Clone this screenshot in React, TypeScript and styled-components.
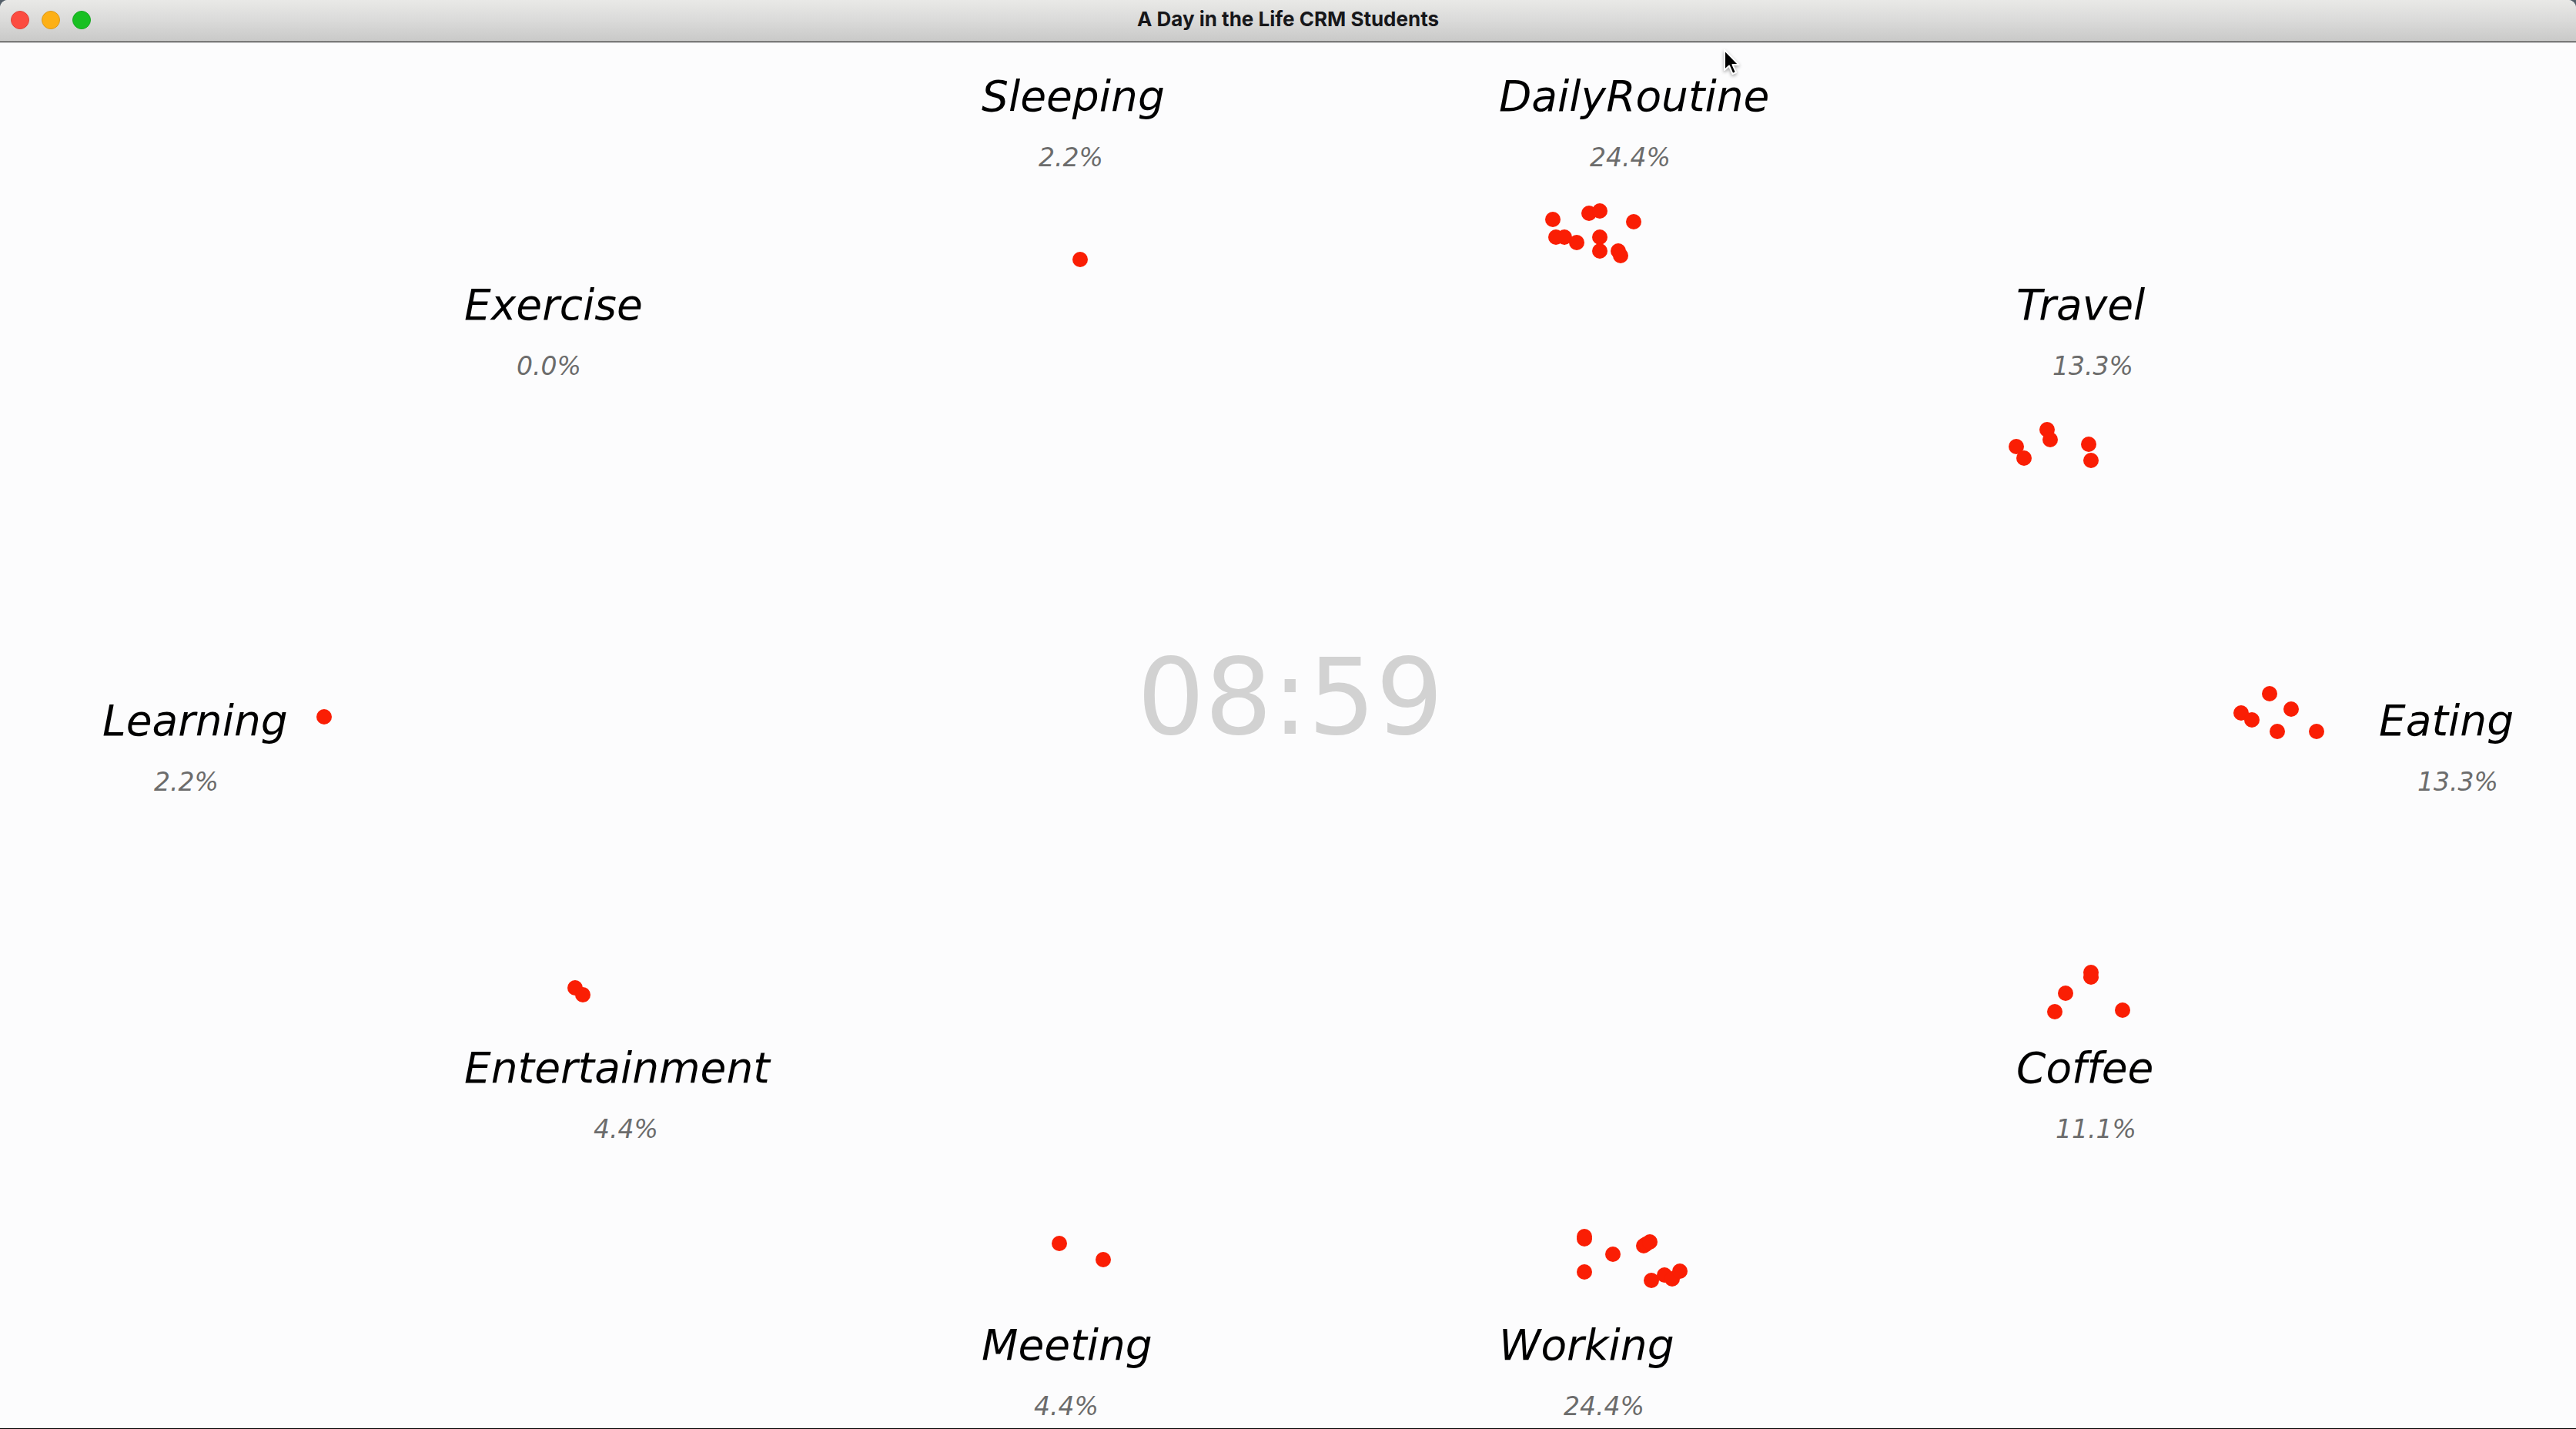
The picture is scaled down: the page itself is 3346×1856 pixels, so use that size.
import React from "react";
import styled, { createGlobalStyle } from "styled-components";

/* Size of the simulation world; places on it are scaled to the window. */
const WORLD = { width: 3346, height: 1800 };

type Point = [number, number];

interface Activity {
  name: string;
  share: string;
  at: Point;
  indent: number;
  students: Point[];
}

const activities: Activity[] = [
  { name: "Sleeping", share: "2.2%", at: [1275, 37], indent: 74, students: [[1403, 282]] },
  {
    name: "DailyRoutine", share: "24.4%", at: [1947, 37], indent: 118,
    students: [
      [2017, 230], [2064, 222], [2078, 219], [2122, 233], [2021, 253], [2032, 253],
      [2048, 260], [2078, 253], [2078, 271], [2102, 271], [2105, 277],
    ],
  },
  {
    name: "Travel", share: "13.3%", at: [2619, 308], indent: 47,
    students: [[2659, 503], [2663, 516], [2619, 525], [2629, 540], [2713, 522], [2716, 543]],
  },
  {
    name: "Eating", share: "13.3%", at: [3090, 848], indent: 50,
    students: [[2948, 846], [2976, 866], [2911, 871], [2925, 880], [2958, 895], [3009, 895]],
  },
  {
    name: "Coffee", share: "11.1%", at: [2619, 1299], indent: 51,
    students: [[2716, 1208], [2716, 1214], [2683, 1235], [2669, 1259], [2757, 1257]],
  },
  {
    name: "Working", share: "24.4%", at: [1947, 1659], indent: 84,
    students: [
      [2058, 1551], [2058, 1554], [2058, 1597], [2095, 1574], [2135, 1563], [2138, 1561],
      [2143, 1558], [2145, 1608], [2162, 1601], [2172, 1606], [2182, 1596],
    ],
  },
  { name: "Meeting", share: "4.4%", at: [1275, 1659], indent: 68, students: [[1376, 1560], [1433, 1581]] },
  { name: "Entertainment", share: "4.4%", at: [603, 1299], indent: 168, students: [[747, 1228], [757, 1237]] },
  { name: "Learning", share: "2.2%", at: [133, 848], indent: 67, students: [[421, 876]] },
  { name: "Exercise", share: "0.0%", at: [603, 308], indent: 68, students: [] },
];

const place = ([x, y]: Point): React.CSSProperties => ({
  left: `${(x / WORLD.width) * 100}%`,
  top: `${(y / WORLD.height) * 100}%`,
});

const GlobalStyle = createGlobalStyle`
  body {
    margin: 0;
    background: #55606a;
  }
`;

const Window = styled.main`
  display: flex;
  flex-direction: column;
  box-sizing: border-box;
  min-height: 100vh;
  overflow: hidden;
  border-bottom: 1px solid #000;
  border-radius: 10px 10px 0 0;
  background: #fcfcfd;
  font-family: "DejaVu Sans", Verdana, sans-serif;
  font-variant-ligatures: none;
`;

const TitleBar = styled.header`
  display: grid;
  grid-template-columns: 1fr auto 1fr;
  align-items: center;
  height: 54px;
  padding: 0 14px;
  border-bottom: 1px solid #000;
  background: linear-gradient(#e9e9e7, #dadad9 50%, #c9c9c8);
`;

const WindowControls = styled.div`
  display: flex;
  gap: 16px;
`;

const WindowButton = styled.button<{ $fill: string; $rim: string }>`
  width: 24px;
  height: 24px;
  margin-bottom: 2px;
  padding: 0;
  border: 1px solid ${(p) => p.$rim};
  border-radius: 50%;
  background: ${(p) => p.$fill};
`;

const Title = styled.h1`
  margin: 0 0 4px;
  color: #17171a;
  font-family: Inter, "Liberation Sans", sans-serif;
  font-size: 26px;
  font-weight: 700;
  line-height: 32px;
`;

const World = styled.section`
  position: relative;
  flex: 1;
`;

const Clock = styled.time`
  position: absolute;
  color: #d2d2d2;
  font-size: 138px;
  line-height: 162px;
`;

const Place = styled.article`
  position: absolute;
  display: flex;
  flex-direction: column;
  gap: 27px;
  font-style: italic;
  white-space: nowrap;
`;

const PlaceName = styled.h2`
  margin: 0;
  color: #000;
  font-size: 55px;
  font-weight: 400;
  line-height: 66px;
`;

const Share = styled.p<{ $indent: number }>`
  margin: 0 0 0 ${(p) => p.$indent}px;
  color: #6c6c6c;
  font-size: 33px;
  line-height: 40px;
`;

const Student = styled.span`
  position: absolute;
  width: 20px;
  height: 20px;
  margin: -10px 0 0 -10px;
  border-radius: 50%;
  background: #fa1e04;
`;

const Pointer = styled.svg`
  position: absolute;
  width: 26px;
  height: 38px;
  filter: drop-shadow(0 2px 2px rgba(0, 0, 0, 0.35));
`;

export default function App() {
  return (
    <>
      <GlobalStyle />
      <Window>
        <TitleBar>
          <WindowControls>
            <WindowButton aria-label="Close" $fill="#fc4b40" $rim="#e0453c" />
            <WindowButton aria-label="Minimize" $fill="#fdb016" $rim="#dc9a1c" />
            <WindowButton aria-label="Zoom" $fill="#18c022" $rim="#18a822" />
          </WindowControls>
          <Title>A Day in the Life CRM Students</Title>
        </TitleBar>
        <World>
          <Clock style={place([1477, 770])}>08:59</Clock>
          {activities.map((activity) => (
            <Place key={activity.name} style={place(activity.at)}>
              <PlaceName>{activity.name}</PlaceName>
              <Share $indent={activity.indent}>{activity.share}</Share>
            </Place>
          ))}
          {activities.flatMap((activity) =>
            activity.students.map((point, i) => (
              <Student key={`${activity.name}-${i}`} style={place(point)} />
            ))
          )}
          <Pointer style={place([2237, 7])} viewBox="0 0 26 38" aria-hidden="true">
            <path
              d="M3 3 V29 L9 23.500 L13.500 34 L18 32 L13.500 22 H21.500 Z"
              fill="#000"
              stroke="#fff"
              strokeWidth="2"
              strokeLinejoin="round"
            />
          </Pointer>
        </World>
      </Window>
    </>
  );
}
